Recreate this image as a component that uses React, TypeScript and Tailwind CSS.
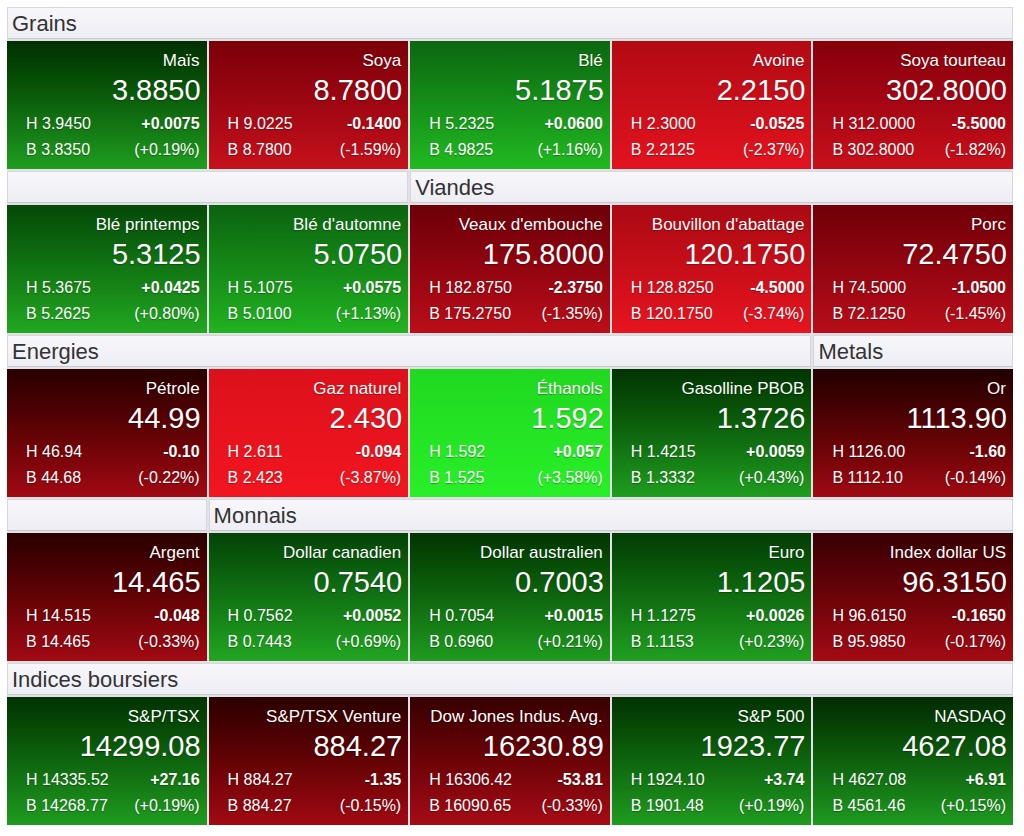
type Quote = {
  name: string;
  last: string;
  high: string;
  low: string;
  change: string;
  pct: string;
  bg: string;
};

type Section = {
  headers: { label: string; span: string }[];
  quotes: Quote[];
};

const sections: Section[] = [
  {
    headers: [{ label: "Grains", span: "col-span-5" }],
    quotes: [
      { name: "Maïs", last: "3.8850", high: "3.9450", low: "3.8350", change: "+0.0075", pct: "(+0.19%)", bg: "from-[#012f01] to-[#1f9e1f]" },
      { name: "Soya", last: "8.7800", high: "9.0225", low: "8.7800", change: "-0.1400", pct: "(-1.59%)", bg: "from-[#7a0008] to-[#c6111c]" },
      { name: "Blé", last: "5.1875", high: "5.2325", low: "4.9825", change: "+0.0600", pct: "(+1.16%)", bg: "from-[#0b6710] to-[#21ba21]" },
      { name: "Avoine", last: "2.2150", high: "2.3000", low: "2.2125", change: "-0.0525", pct: "(-2.37%)", bg: "from-[#b20a14] to-[#e3131e]" },
      { name: "Soya tourteau", last: "302.8000", high: "312.0000", low: "302.8000", change: "-5.5000", pct: "(-1.82%)", bg: "from-[#85000b] to-[#c9101b]" },
    ],
  },
  {
    headers: [
      { label: "", span: "col-span-2" },
      { label: "Viandes", span: "col-span-3" },
    ],
    quotes: [
      { name: "Blé printemps", last: "5.3125", high: "5.3675", low: "5.2625", change: "+0.0425", pct: "(+0.80%)", bg: "from-[#054907] to-[#21a821]" },
      { name: "Blé d'automne", last: "5.0750", high: "5.1075", low: "5.0100", change: "+0.0575", pct: "(+1.13%)", bg: "from-[#0b630f] to-[#21b321]" },
      { name: "Veaux d'embouche", last: "175.8000", high: "182.8750", low: "175.2750", change: "-2.3750", pct: "(-1.35%)", bg: "from-[#6c0008] to-[#bb0e18]" },
      { name: "Bouvillon d'abattage", last: "120.1750", high: "128.8250", low: "120.1750", change: "-4.5000", pct: "(-3.74%)", bg: "from-[#aa0913] to-[#e7141f]" },
      { name: "Porc", last: "72.4750", high: "74.5000", low: "72.1250", change: "-1.0500", pct: "(-1.45%)", bg: "from-[#700008] to-[#b80e18]" },
    ],
  },
  {
    headers: [
      { label: "Energies", span: "col-span-4" },
      { label: "Metals", span: "col-span-1" },
    ],
    quotes: [
      { name: "Pétrole", last: "44.99", high: "46.94", low: "44.68", change: "-0.10", pct: "(-0.22%)", bg: "from-[#290000] to-[#a20a13]" },
      { name: "Gaz naturel", last: "2.430", high: "2.611", low: "2.423", change: "-0.094", pct: "(-3.87%)", bg: "from-[#dc111b] to-[#f2151f]" },
      { name: "Éthanols", last: "1.592", high: "1.592", low: "1.525", change: "+0.057", pct: "(+3.58%)", bg: "from-[#20d820] to-[#28f028]" },
      { name: "Gasolline PBOB", last: "1.3726", high: "1.4215", low: "1.3332", change: "+0.0059", pct: "(+0.43%)", bg: "from-[#023402] to-[#1f9e1f]" },
      { name: "Or", last: "1113.90", high: "1126.00", low: "1112.10", change: "-1.60", pct: "(-0.14%)", bg: "from-[#230000] to-[#a00a12]" },
    ],
  },
  {
    headers: [
      { label: "", span: "col-span-1" },
      { label: "Monnais", span: "col-span-4" },
    ],
    quotes: [
      { name: "Argent", last: "14.465", high: "14.515", low: "14.465", change: "-0.048", pct: "(-0.33%)", bg: "from-[#2a0000] to-[#a20a13]" },
      { name: "Dollar canadien", last: "0.7540", high: "0.7562", low: "0.7443", change: "+0.0052", pct: "(+0.69%)", bg: "from-[#044407] to-[#21a621]" },
      { name: "Dollar australien", last: "0.7003", high: "0.7054", low: "0.6960", change: "+0.0015", pct: "(+0.21%)", bg: "from-[#023502] to-[#1f9c1f]" },
      { name: "Euro", last: "1.1205", high: "1.1275", low: "1.1153", change: "+0.0026", pct: "(+0.23%)", bg: "from-[#033d04] to-[#20a020]" },
      { name: "Index dollar US", last: "96.3150", high: "96.6150", low: "95.9850", change: "-0.1650", pct: "(-0.17%)", bg: "from-[#380002] to-[#a50b14]" },
    ],
  },
  {
    headers: [{ label: "Indices boursiers", span: "col-span-5" }],
    quotes: [
      { name: "S&P/TSX", last: "14299.08", high: "14335.52", low: "14268.77", change: "+27.16", pct: "(+0.19%)", bg: "from-[#023302] to-[#1f9c1f]" },
      { name: "S&P/TSX Venture", last: "884.27", high: "884.27", low: "884.27", change: "-1.35", pct: "(-0.15%)", bg: "from-[#2c0000] to-[#a20a13]" },
      { name: "Dow Jones Indus. Avg.", last: "16230.89", high: "16306.42", low: "16090.65", change: "-53.81", pct: "(-0.33%)", bg: "from-[#370001] to-[#a70c15]" },
      { name: "S&P 500", last: "1923.77", high: "1924.10", low: "1901.48", change: "+3.74", pct: "(+0.19%)", bg: "from-[#023302] to-[#1f9c1f]" },
      { name: "NASDAQ", last: "4627.08", high: "4627.08", low: "4561.46", change: "+6.91", pct: "(+0.15%)", bg: "from-[#022c02] to-[#1f9a1f]" },
    ],
  },
];

function Header({ label, span }: { label: string; span: string }) {
  return (
    <div
      className={`${span} h-[32px] border border-[#d6d6dc] border-b-[#c9c9d0] bg-linear-to-b from-[#f7f7fb] to-[#ededf4] pl-[4px] text-[22px] leading-[32px] text-[#333]`}
    >
      {label}
    </div>
  );
}

function Tile({ q }: { q: Quote }) {
  return (
    <div
      className={`flex h-[128px] flex-col bg-linear-to-b ${q.bg} pt-[10px] text-white [text-shadow:0_1px_1px_rgba(0,0,0,0.3)]`}
    >
      <div className="pr-[7px] text-right text-[17px] leading-[20px] whitespace-nowrap">{q.name}</div>
      <div className="mt-[1px] pr-[6px] text-right text-[29px] leading-[36px]">{q.last}</div>
      <div className="mt-[3px] flex justify-between pr-[7px] pl-[19px] text-[16px] leading-[26px]">
        <span>H {q.high}</span>
        <span className="font-bold">{q.change}</span>
      </div>
      <div className="flex justify-between pr-[7px] pl-[19px] text-[16px] leading-[26px]">
        <span>B {q.low}</span>
        <span>{q.pct}</span>
      </div>
    </div>
  );
}

export default function App() {
  return (
    <div className="min-h-screen bg-white pt-[7px] pl-[7px] font-['Liberation_Sans',Arial,sans-serif]">
      <div className="grid w-[1006px] grid-cols-5 gap-[2px] bg-[#e2e2e6]">
        {sections.map((s, i) => (
          <div key={i} className="contents">
            {s.headers.map((h, j) => (
              <Header key={j} label={h.label} span={h.span} />
            ))}
            {s.quotes.map((q) => (
              <Tile key={q.name} q={q} />
            ))}
          </div>
        ))}
      </div>
    </div>
  );
}
